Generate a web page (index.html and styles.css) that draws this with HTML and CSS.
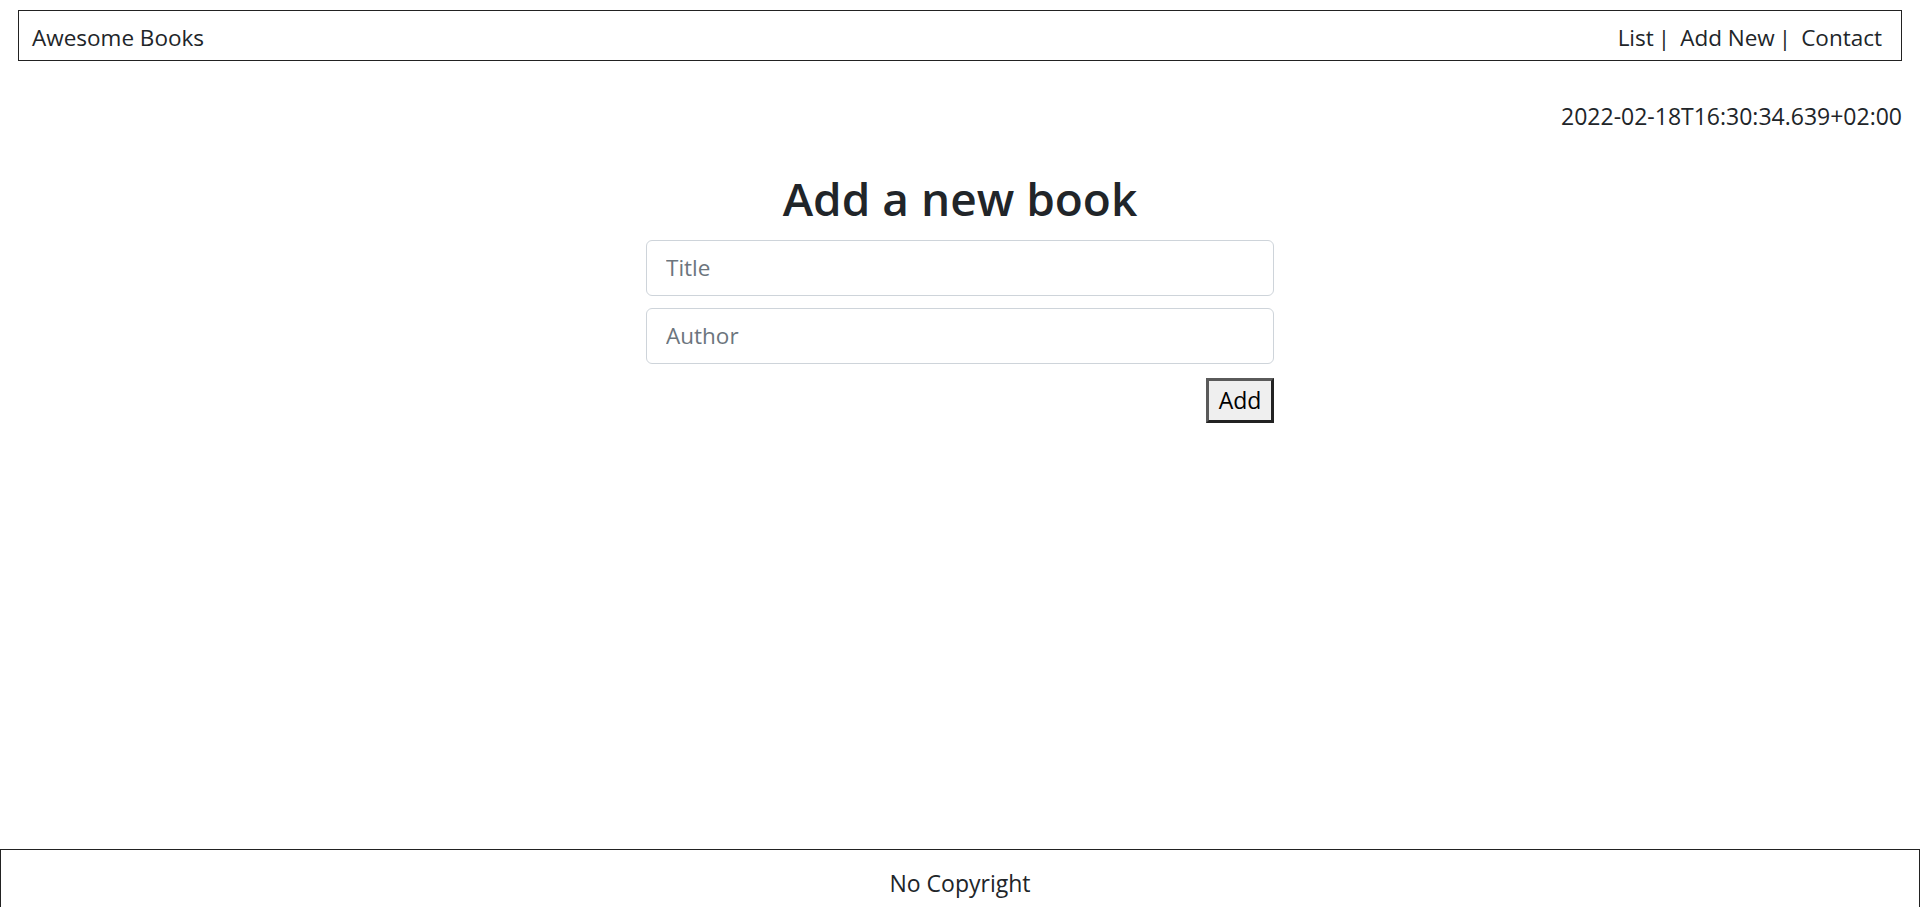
FILE: index.html
```html
<!DOCTYPE html>
<html lang="en">
<head>
<meta charset="utf-8">
<title>Awesome Books</title>
<link rel="stylesheet" href="styles.css">
</head>
<body>
<header class="topbar">
  <span class="brand">Awesome Books</span>
  <nav class="menu">
    <a class="menu-link" href="#">List</a><span class="sep">|</span>
    <a class="menu-link" href="#">Add New</a><span class="sep">|</span>
    <a class="menu-link" href="#">Contact</a>
  </nav>
</header>
<p class="stamp">2022-02-18T16:30:34.639+02:00</p>
<main class="content">
  <h1 class="heading">Add a new book</h1>
  <form class="book-form">
    <input class="field" type="text" placeholder="Title">
    <input class="field" type="text" placeholder="Author">
    <div class="actions"><button class="add-btn" type="button">Add</button></div>
  </form>
</main>
<footer class="footer">No Copyright</footer>
</body>
</html>
```
FILE: styles.css
```css
html, body {
  height: 100%;
}
body {
  margin: 0;
  font-family: "Open Sans", "Noto Sans", sans-serif;
  color: #212529;
  background: #fff;
  display: flex;
  flex-direction: column;
  overflow: hidden;
}
.topbar {
  margin: 10px 18px 0;
  height: 46px;
  border: 1px solid #222;
  display: flex;
  align-items: center;
  justify-content: space-between;
  padding: 3px 19px 0 13px;
}
.brand {
  font-size: 22.5px;
}
.menu {
  display: flex;
  align-items: center;
  font-size: 22.5px;
}
.menu-link {
  color: #212529;
  text-decoration: none;
}
.sep {
  margin: 0 10px 0 4px;
}
.stamp {
  margin: 38px 18px 0 0;
  text-align: right;
  font-size: 23px;
  line-height: 1.5;
}
.content {
  width: 628px;
  margin: 0 auto;
}
.heading {
  margin: 37px 0 14px;
  text-align: center;
  font-size: 46px;
  font-weight: 600;
  line-height: 1.2;
}
.book-form {
  display: flex;
  flex-direction: column;
  gap: 12px;
}
.field {
  box-sizing: border-box;
  height: 56px;
  width: 100%;
  border: 1px solid #ced4da;
  border-radius: 6px;
  padding: 0 19px;
  font-family: inherit;
  font-size: 22.5px;
  color: #212529;
}
.field::placeholder {
  color: #6c757d;
}
.actions {
  display: flex;
  justify-content: flex-end;
  margin-top: 2px;
}
.add-btn {
  box-sizing: border-box;
  height: 45px;
  width: 68px;
  background: #efefef;
  border-style: solid;
  border-width: 3px;
  border-color: #5a5a5a #222 #222 #5a5a5a;
  font-family: inherit;
  font-size: 23px;
  color: #000;
  padding: 0;
}
.footer {
  margin-top: auto;
  height: 58px;
  box-sizing: border-box;
  border: 1px solid #222;
  border-bottom: none;
  text-align: center;
  font-size: 23px;
  padding-top: 17px;
}
```
